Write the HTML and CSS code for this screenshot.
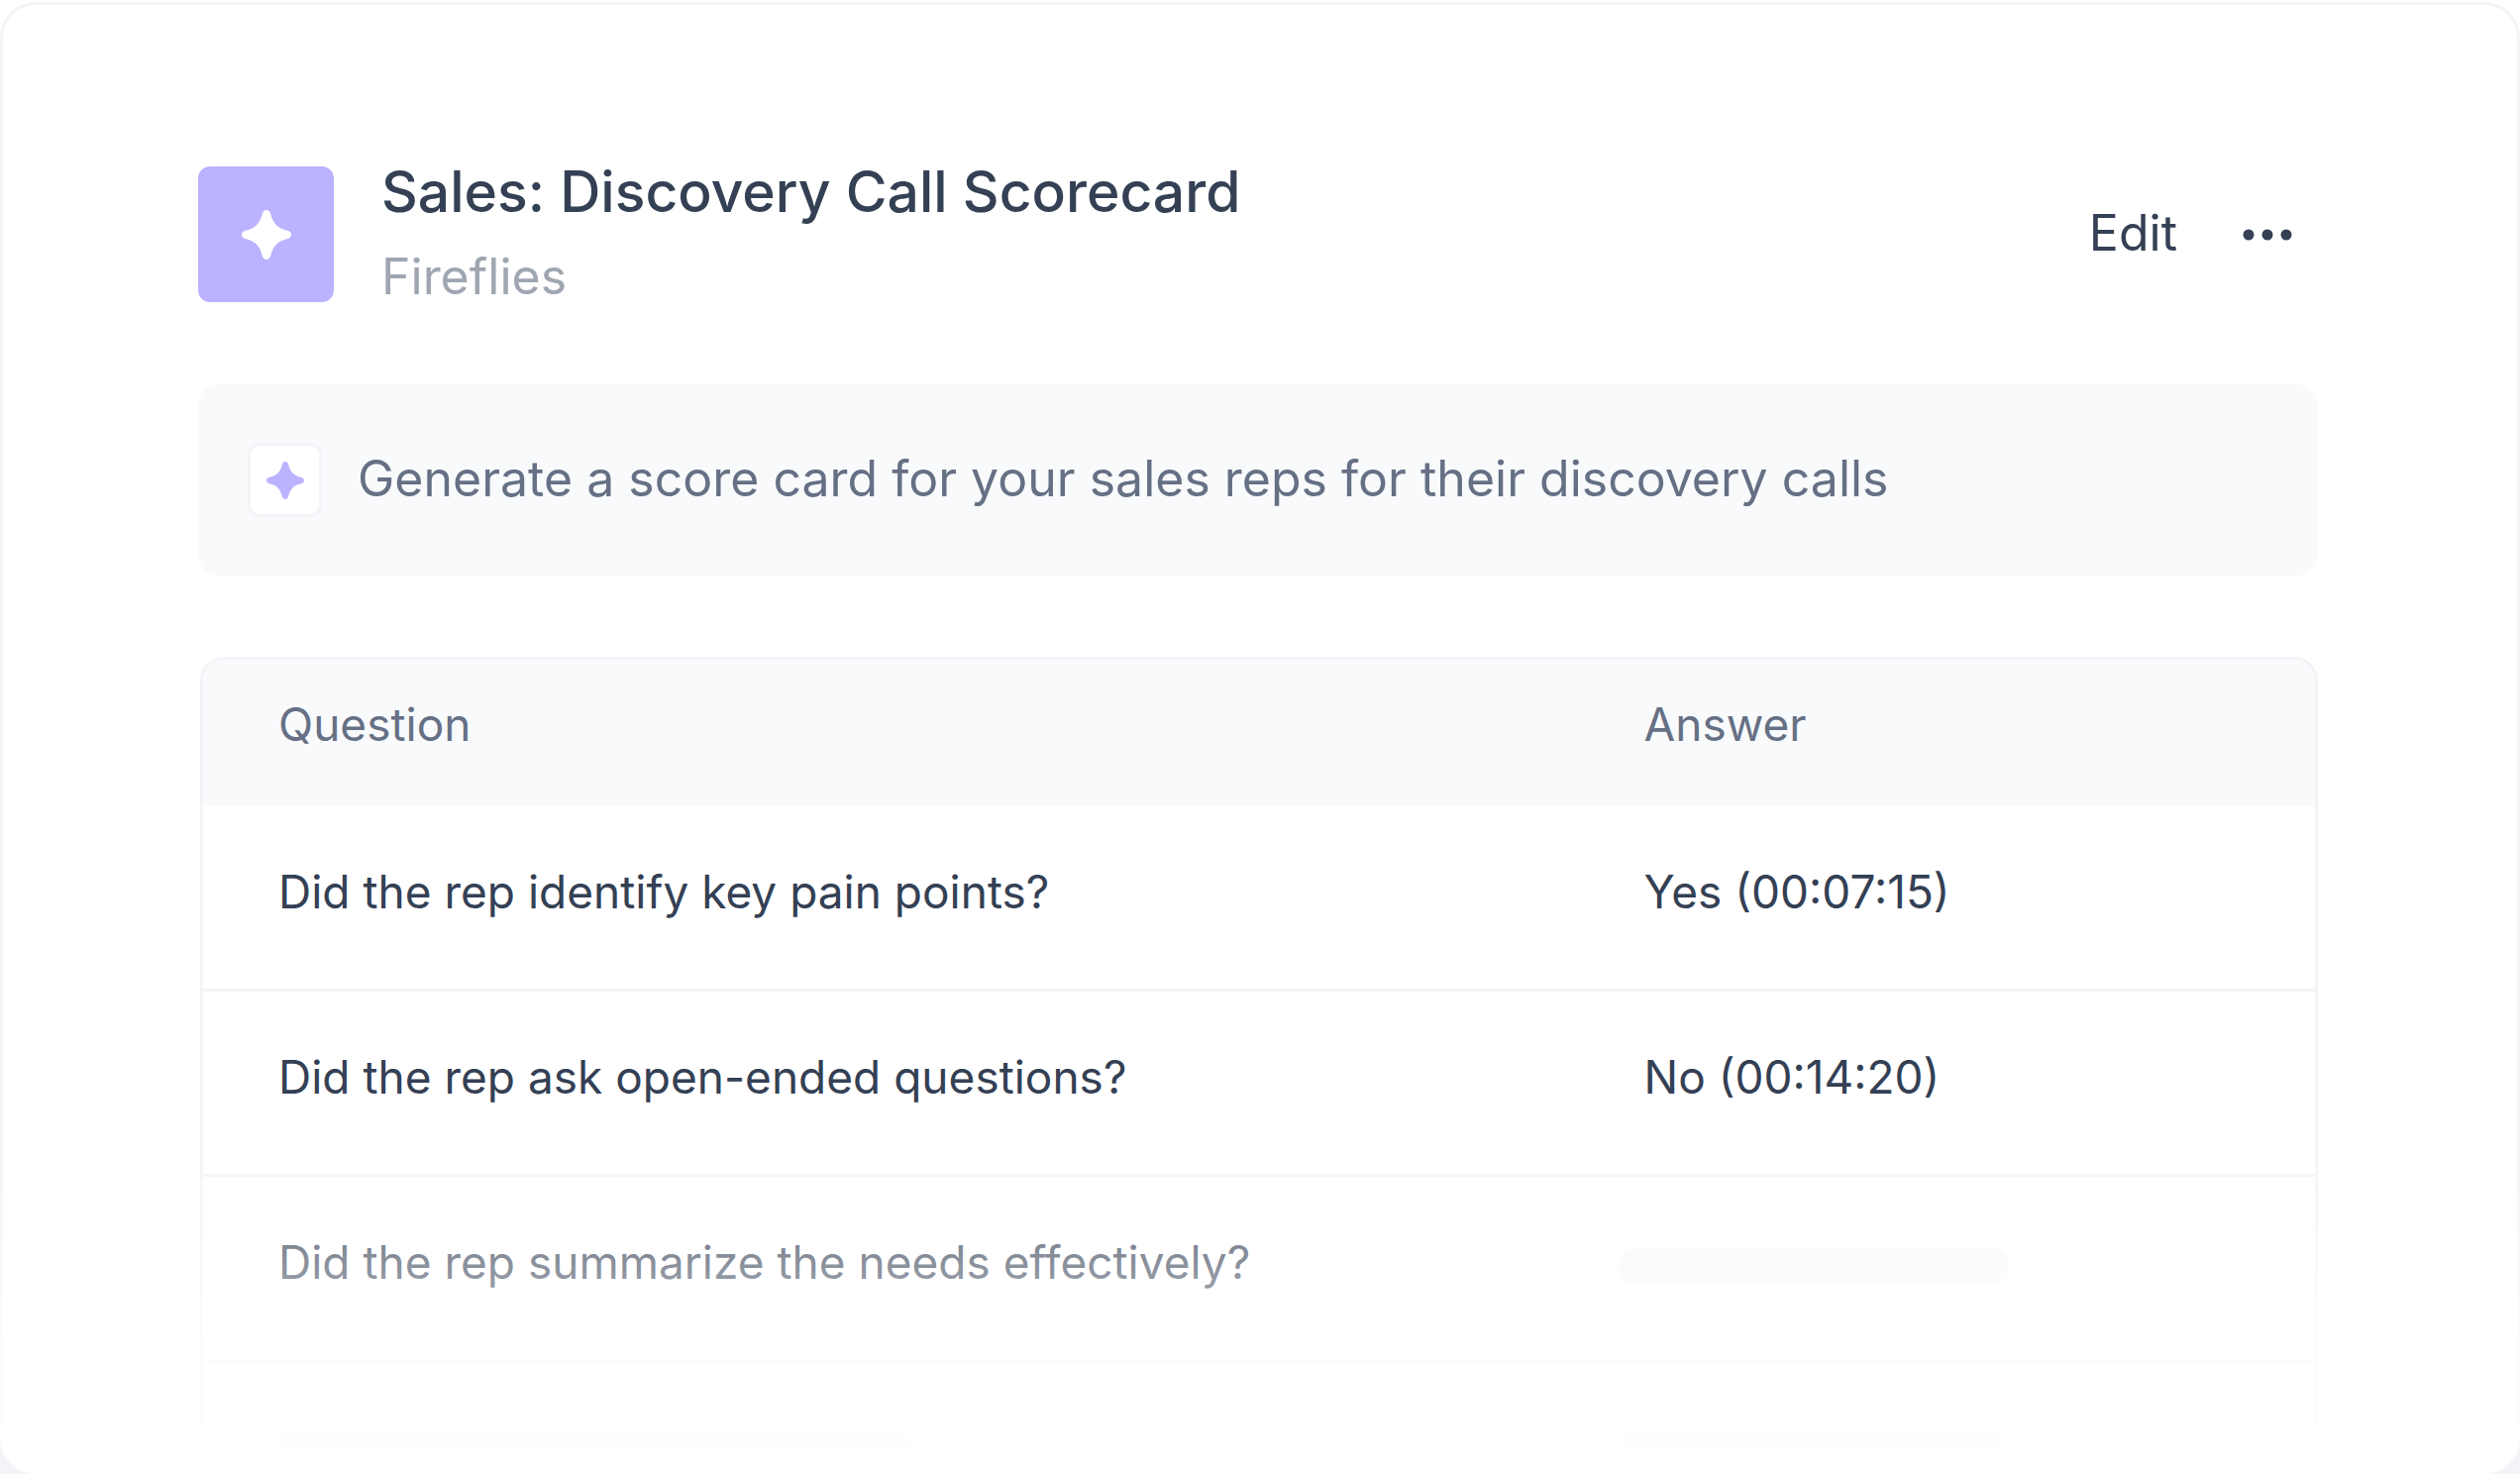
FILE: index.html
```
<!DOCTYPE html>
<html lang="en">
<head>
  <meta charset="UTF-8">
  <meta name="viewport" content="width=device-width, initial-scale=1">
  <title>Sales: Discovery Call Scorecard</title>
  <link rel="stylesheet" href="styles.css">
</head>
<body>

  <svg class="sprite" aria-hidden="true">
    <symbol id="spark" viewBox="0 0 50 50">
      <path d="M25 0C27 0 28.600 1.500 29.200 3.800C31.500 13.500 36.500 18.800 46 20.800C48.500 21.300 50 23 50 25C50 27 48.500 28.700 46 29.200C36.500 31.200 31.500 36.500 29.200 46.200C28.600 48.500 27 50 25 50C23 50 21.400 48.500 20.800 46.200C18.500 36.500 13.500 31.200 4 29.200C1.500 28.700 0 27 0 25C0 23 1.500 21.300 4 20.800C13.500 18.800 18.500 13.500 20.800 3.800C21.400 1.500 23 0 25 0Z"/>
    </symbol>
  </svg>

  <main class="card">
    <header class="card-header">
      <div class="app-icon">
        <svg class="spark-lg"><use href="#spark"/></svg>
      </div>
      <div class="titles">
        <h1>Sales: Discovery Call Scorecard</h1>
        <p class="subtitle">Fireflies</p>
      </div>
      <div class="actions">
        <button class="edit-btn" type="button">Edit</button>
        <button class="more-btn" type="button" aria-label="More options">
          <svg viewBox="0 0 50 12" width="50" height="12">
            <circle cx="6" cy="6" r="5.500"/>
            <circle cx="25" cy="6" r="5.500"/>
            <circle cx="44" cy="6" r="5.500"/>
          </svg>
        </button>
      </div>
    </header>

    <div class="prompt">
      <div class="prompt-icon">
        <svg class="spark-sm"><use href="#spark"/></svg>
      </div>
      <p class="prompt-text">Generate a score card for your sales reps for their discovery calls</p>
    </div>

    <div class="table-wrap">
      <table>
        <thead>
          <tr>
            <th class="question">Question</th>
            <th>Answer</th>
          </tr>
        </thead>
        <tbody>
          <tr>
            <td>Did the rep identify key pain points?</td>
            <td>Yes (00:07:15)</td>
          </tr>
          <tr>
            <td>Did the rep ask open-ended questions?</td>
            <td>No (00:14:20)</td>
          </tr>
          <tr>
            <td>Did the rep summarize the needs effectively?</td>
            <td class="pending"><div class="skeleton"></div></td>
          </tr>
          <tr>
            <td><div class="skeleton skeleton-wide"></div></td>
            <td class="pending"><div class="skeleton"></div></td>
          </tr>
        </tbody>
      </table>
    </div>
  </main>

</body>
</html>
```
FILE: styles.css
```
* {
  box-sizing: border-box;
}
body {
  margin: 0;
  padding-top: 2px;
  font-family: Inter, "Liberation Sans", sans-serif;
  background: linear-gradient(#ffffff 50%, #f2f4f7 50%);
  color: #344054;
}
h1, p {
  margin: 0;
}
.sprite {
  position: absolute;
  width: 0;
  height: 0;
}
.card {
  position: relative;
  height: calc(100vh - 2px);
  padding: 162px 204px 0 200px;
  overflow: hidden;
  background-color: #ffffff;
  box-shadow: inset 0 0 0 3px #f2f4f7;
  border-radius: 36px;
}
/* fades the last rows and the card edge into white */
.card::after {
  content: "";
  position: absolute;
  left: 0;
  right: 0;
  bottom: 0;
  height: 368px;
  background: linear-gradient(rgba(255,255,255,0), #ffffff);
  pointer-events: none;
}
.card-header {
  display: flex;
  align-items: center;
  gap: 48px;
}
.app-icon {
  display: flex;
  align-items: center;
  justify-content: center;
  width: 137px;
  height: 137px;
  background-color: #bbb3ff;
  border-radius: 12px;
}
.spark-lg {
  width: 50px;
  height: 50px;
  fill: #ffffff;
}
.titles {
  flex: 1;
}
h1 {
  font-size: 57px;
  font-weight: 500;
  line-height: 60px;
}
.subtitle {
  margin-top: 25px;
  font-size: 50px;
  line-height: 60px;
  color: #9fa6b2;
}
.actions {
  display: flex;
  align-items: center;
  gap: 66px;
  padding-right: 26px;
}
button {
  padding: 0;
  border: none;
  background: none;
  color: inherit;
  font-family: inherit;
  cursor: pointer;
}
.edit-btn {
  padding-bottom: 4px;
  font-size: 50px;
  line-height: 60px;
}
.more-btn svg {
  display: block;
  fill: #344054;
}
.prompt {
  display: flex;
  align-items: center;
  gap: 36px;
  min-height: 195px;
  margin-top: 78px;
  padding: 0 50px;
  background-color: #f9fafc;
  border-radius: 24px;
}
.prompt-text {
  padding-bottom: 4px;
  color: #667085;
  font-size: 50px;
  line-height: 60px;
}
.prompt-icon {
  display: flex;
  align-items: center;
  justify-content: center;
  width: 75px;
  height: 75px;
  background-color: #ffffff;
  border: 3px solid #f2f4f7;
  border-radius: 12px;
}
.spark-sm {
  width: 38px;
  height: 38px;
  fill: #bbb3ff;
}
.table-wrap {
  margin: 81px 0 0 2px;
  overflow: hidden;
  border: 3px solid #f2f4f7;
  border-radius: 24px;
}
table {
  width: 100%;
  border-collapse: separate;
  border-spacing: 0;
  font-size: 46px;
  line-height: 56px;
}
th {
  height: 148px;
  padding: 0 0 18px 76px;
  background-color: #f9fafc;
  color: #667085;
  font-weight: 400;
  text-align: left;
}
td {
  height: 187px;
  padding: 0 0 12px 76px;
  border-bottom: 3px solid #f2f4f7;
}
.question {
  width: 61%;
}
th + th, td + td {
  padding-left: 154px;
}
td + .pending {
  padding: 0 0 2px 127px;
}
.skeleton {
  width: 395px;
  height: 38px;
  background-color: #f6f9fb;
  border-radius: 19px;
}
.skeleton-wide {
  width: 640px;
}
```
